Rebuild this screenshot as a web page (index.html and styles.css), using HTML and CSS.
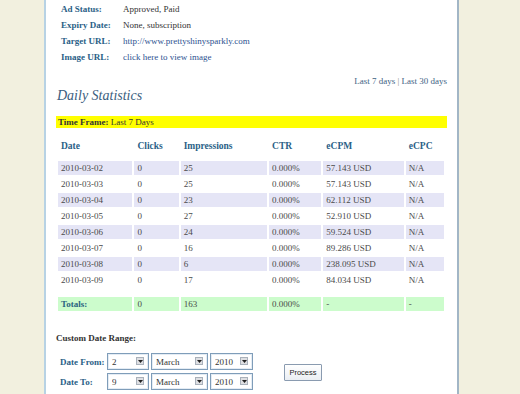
FILE: index.html
```html
<!DOCTYPE html>
<html lang="en">
<head>
    <meta charset="UTF-8">
    <meta name="viewport" content="width=device-width, initial-scale=1.0">
    <title>Ad Statistics</title>
    <link rel="stylesheet" href="styles.css">
</head>
<body>

<div id="page">

    <table class="ad-info">
        <tr><th>Ad Status:</th><td>Approved, Paid</td></tr>
        <tr><th>Expiry Date:</th><td>None, subscription</td></tr>
        <tr><th>Target URL:</th><td><a href="#">http://www.prettyshinysparkly.com</a></td></tr>
        <tr><th>Image URL:</th><td><a href="#">click here to view image</a></td></tr>
    </table>

    <div class="ranges"><a href="#">Last 7 days</a> | <a href="#">Last 30 days</a></div>

    <h2>Daily Statistics</h2>

    <div class="timeframe"><b>Time Frame:</b> Last 7 Days</div>

    <table class="stats">
        <thead>
            <tr>
                <th class="c-date">Date</th>
                <th class="c-clicks">Clicks</th>
                <th class="c-imp">Impressions</th>
                <th class="c-ctr">CTR</th>
                <th class="c-ecpm">eCPM</th>
                <th class="c-ecpc">eCPC</th>
            </tr>
        </thead>
        <tbody>
            <tr class="alt"><td>2010-03-02</td><td>0</td><td>25</td><td>0.000%</td><td>57.143 USD</td><td>N/A</td></tr>
            <tr><td>2010-03-03</td><td>0</td><td>25</td><td>0.000%</td><td>57.143 USD</td><td>N/A</td></tr>
            <tr class="alt"><td>2010-03-04</td><td>0</td><td>23</td><td>0.000%</td><td>62.112 USD</td><td>N/A</td></tr>
            <tr><td>2010-03-05</td><td>0</td><td>27</td><td>0.000%</td><td>52.910 USD</td><td>N/A</td></tr>
            <tr class="alt"><td>2010-03-06</td><td>0</td><td>24</td><td>0.000%</td><td>59.524 USD</td><td>N/A</td></tr>
            <tr><td>2010-03-07</td><td>0</td><td>16</td><td>0.000%</td><td>89.286 USD</td><td>N/A</td></tr>
            <tr class="alt"><td>2010-03-08</td><td>0</td><td>6</td><td>0.000%</td><td>238.095 USD</td><td>N/A</td></tr>
            <tr><td>2010-03-09</td><td>0</td><td>17</td><td>0.000%</td><td>84.034 USD</td><td>N/A</td></tr>
        </tbody>
        <tfoot>
            <tr class="spacer"><td colspan="6"></td></tr>
            <tr class="totals"><th>Totals:</th><td>0</td><td>163</td><td>0.000%</td><td>-</td><td>-</td></tr>
        </tfoot>
    </table>

    <h3>Custom Date Range:</h3>

    <form class="custom-range" onsubmit="return false">
        <label class="range-label">Date From:</label>
        <span class="sel sel-day">
            <select name="from_day"><option>1</option><option selected>2</option><option>3</option></select>
            <span class="arrow"><svg width="5" height="3" viewBox="0 0 5 3"><path d="M0 0h5L2.5 3z" fill="#222"/></svg></span>
        </span>
        <span class="sel sel-month">
            <select name="from_month"><option>February</option><option selected>March</option><option>April</option></select>
            <span class="arrow"><svg width="5" height="3" viewBox="0 0 5 3"><path d="M0 0h5L2.5 3z" fill="#222"/></svg></span>
        </span>
        <span class="sel sel-year">
            <select name="from_year"><option>2009</option><option selected>2010</option></select>
            <span class="arrow"><svg width="5" height="3" viewBox="0 0 5 3"><path d="M0 0h5L2.5 3z" fill="#222"/></svg></span>
        </span>
        <button class="process">Process</button>

        <label class="range-label">Date To:</label>
        <span class="sel sel-day">
            <select name="to_day"><option>8</option><option selected>9</option><option>10</option></select>
            <span class="arrow"><svg width="5" height="3" viewBox="0 0 5 3"><path d="M0 0h5L2.5 3z" fill="#222"/></svg></span>
        </span>
        <span class="sel sel-month">
            <select name="to_month"><option>February</option><option selected>March</option><option>April</option></select>
            <span class="arrow"><svg width="5" height="3" viewBox="0 0 5 3"><path d="M0 0h5L2.5 3z" fill="#222"/></svg></span>
        </span>
        <span class="sel sel-year">
            <select name="to_year"><option>2009</option><option selected>2010</option></select>
            <span class="arrow"><svg width="5" height="3" viewBox="0 0 5 3"><path d="M0 0h5L2.5 3z" fill="#222"/></svg></span>
        </span>
    </form>

</div>

</body>
</html>
```

FILE: styles.css
```css
body {
    margin: 0;
    background: #f2f0df;
    font-family: "Liberation Serif", "Times New Roman", serif;
    font-size: 9px;
    color: #4a4a4a;
}
a {
    color: #2d5290;
    text-decoration: none;
}
#page {
    margin-left: 44px;
    width: 391px;
    min-height: calc(100vh - 5px);
    padding: 1px 10px 4px;
    background: #fff;
    border-left: 2px solid #b7d2e4;
    border-right: 2px solid #a2b6c6;
}
.ad-info {
    border-collapse: collapse;
    margin-left: 5px;
}
.ad-info th {
    width: 62px;
    padding: 0;
    height: 16px;
    line-height: 16px;
    text-align: left;
    color: #2b5f87;
}
.ad-info td {
    padding: 0;
    color: #333;
}
.ranges {
    margin-top: 10px;
    line-height: 12px;
    text-align: right;
    color: #888;
}
.ranges a {
    color: #3e6284;
}
h2 {
    margin: 0;
    padding-left: 1px;
    font-size: 14px;
    font-style: italic;
    font-weight: normal;
    line-height: 18px;
    color: #3b6080;
}
.timeframe {
    margin-top: 11px;
    height: 12px;
    line-height: 12px;
    padding-left: 2px;
    background: #ffff00;
    color: #333;
}
.stats {
    margin-top: 3px;
    width: 390px;
    table-layout: fixed;
    border-spacing: 2px;
}
.stats th,
.stats td {
    padding: 0 2px 0 3px;
    text-align: left;
    white-space: nowrap;
    overflow: hidden;
}
.stats thead th {
    height: 26px;
    font-size: 9.5px;
    color: #2b5f87;
}
.stats td {
    height: 14px;
    line-height: 14px;
}
.c-date { width: 69px; }
.c-clicks { width: 39px; }
.c-imp { width: 81px; }
.c-ctr { width: 47px; }
.c-ecpm { width: 75px; }
.c-ecpc { width: 33px; }
.stats tr.alt td {
    background: #e5e5f6;
}
.stats tr.spacer td {
    height: 6px;
    padding: 0;
}
.stats tr.totals th,
.stats tr.totals td {
    height: 14px;
    line-height: 14px;
    background: #ccfccc;
}
.stats tr.totals th {
    color: #2a6480;
}
h3 {
    margin: 19px 0 0;
    font-size: 9px;
    line-height: 12px;
    color: #333;
}
.custom-range {
    margin-top: 9px;
    display: grid;
    grid-template-columns: 49px 42px 57px 43px auto;
    column-gap: 2px;
    row-gap: 3px;
    align-items: center;
    justify-content: start;
}
.range-label {
    padding-left: 4px;
    font-weight: bold;
    white-space: nowrap;
    color: #2b5f87;
}
.sel {
    position: relative;
    display: block;
    height: 17px;
    border: 1px solid #7f9db9;
    box-shadow: inset 0 0 0 1px #e4ecf4;
    box-sizing: border-box;
}
.sel select {
    appearance: none;
    -webkit-appearance: none;
    display: block;
    width: 100%;
    height: 100%;
    margin: 0;
    padding: 0 0 0 4px;
    border: 0;
    outline: none;
    background: transparent;
    font-family: inherit;
    font-size: 9px;
    color: #333;
}
.sel .arrow {
    position: absolute;
    right: 4px;
    top: 3px;
    width: 8px;
    height: 8px;
    box-sizing: border-box;
    border: 1px solid #a9b1bb;
    background: #dedfe2;
    display: flex;
    align-items: center;
    justify-content: center;
    pointer-events: none;
}
.sel .arrow svg {
    display: block;
}
.process {
    grid-column: 5;
    grid-row: 1 / 3;
    margin: 1px 0 0 29px;
    width: 38px;
    height: 17px;
    padding: 0;
    border: 1px solid #8a9bb0;
    border-radius: 1px;
    background: linear-gradient(#ffffff, #eaeef3);
    font-family: "Liberation Sans", Arial, sans-serif;
    font-size: 7.5px;
    color: #222;
}
```
